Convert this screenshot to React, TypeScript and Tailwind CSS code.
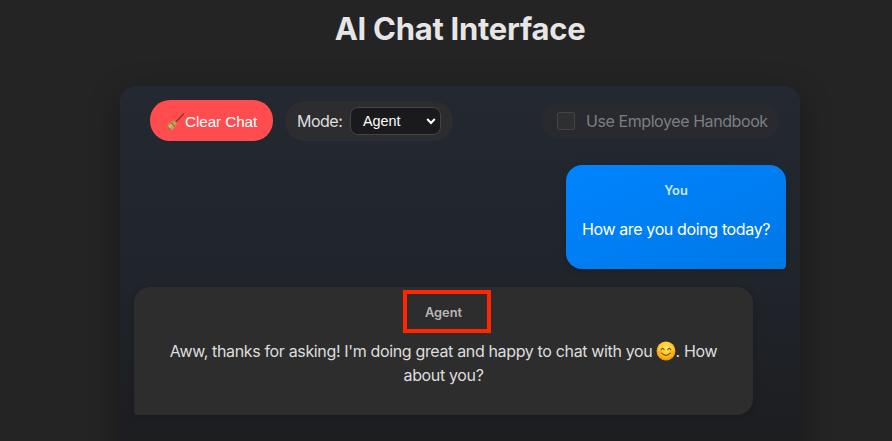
function Broom() {
  return (
    <svg viewBox="0 0 20 20" className="h-5 w-5 shrink-0">
      <path d="M18.6 2 11 9.8" stroke="#753e2a" strokeWidth="1.3" strokeLinecap="round" />
      <path d="M9.2 8.4 12 11.2 10.2 15 6.2 18.8 1.6 14.6 5.5 10.3Z" fill="#c39b55" />
      <path d="m5.8 10.6 4.2 4" stroke="#69502a" strokeWidth="1" />
      <path d="m7 12.5-2.8 3" stroke="#dfc174" strokeWidth="1.4" />
      <path d="m2.2 14.7 4 3.4" stroke="#886633" strokeWidth="1" />
    </svg>
  );
}

function Smile() {
  return (
    <svg viewBox="0 0 20 20" className="-ml-px inline-block h-5 w-5 align-[-4px]">
      <defs>
        <radialGradient id="smile-face" cx="50%" cy="35%" r="65%">
          <stop offset="0" stopColor="#ffe750" />
          <stop offset=".55" stopColor="#ffca2c" />
          <stop offset="1" stopColor="#f59008" />
        </radialGradient>
      </defs>
      <circle cx="10" cy="10" r="9.4" fill="url(#smile-face)" />
      <ellipse cx="4.3" cy="11.2" rx="2.4" ry="1.8" fill="#ff8a21" opacity=".35" />
      <ellipse cx="15.7" cy="11.2" rx="2.4" ry="1.8" fill="#ff8a21" opacity=".35" />
      <path d="M5.2 8.8Q6.7 5.9 8.2 8.8M11.8 8.8Q13.3 5.9 14.8 8.8M5.7 12.1Q10 16.6 14.3 12.1" fill="none" stroke="#7d4912" strokeWidth="1.1" strokeLinecap="round" />
    </svg>
  );
}

export default function App() {
  return (
    <main className="h-[441px] overflow-hidden bg-[#242424] font-[Inter,'Liberation_Sans',sans-serif] text-base text-[#dededf]">
      <h1 className="ml-7 h-[86px] pt-[11px] text-center text-[31px] leading-9 font-bold tracking-[-0.27px] text-[#e6e6e6]">AI Chat Interface</h1>
      <section className="ml-[120px] h-[440px] w-[680px] rounded-2xl bg-linear-to-b from-[#242830] via-[#20242b] via-45% to-[#1a1a1a] px-3.5 pt-3.5 shadow-[0_8px_32px_rgba(0,0,0,0.3)]">
        <header className="flex h-[41px] items-center pr-1.5 pl-4">
          <button className="flex h-[41px] w-[123px] items-center rounded-[20px] bg-[#ff4d4f] pt-[3px] pl-[15px] font-['Liberation_Sans',sans-serif] text-[15.2px] text-white">
            <Broom />
            <span className="whitespace-nowrap tracking-[-0.05px]">Clear Chat</span>
          </button>
          <div className="mt-px ml-3 flex h-10 w-[168px] items-center rounded-[20px] bg-[#2d2d2f] pl-3">
            <span className="w-[53px] tracking-[-0.5px]">Mode:</span>
            <button className="flex h-7 w-[91px] items-center justify-between rounded-lg border border-[#444] bg-[#1a1a1c] pr-[3px] pl-3 font-['Liberation_Sans',sans-serif] text-[14.4px] text-white">
              <span className="pt-px">Agent</span>
              <svg viewBox="0 0 12 12" className="h-3 w-3"><path d="m2.2 4 3.8 4 3.8-4" fill="none" stroke="white" strokeWidth="2" /></svg>
            </button>
          </div>
          <label className="ml-auto flex h-9 w-[239px] items-center rounded-[18px] bg-[#282a30] pl-4 text-[#7d7e81]">
            <span className="mr-[11px] h-[18px] w-[18px] rounded-[2px] border border-[#434447] bg-[#2e2f31]" />
            <span className="whitespace-nowrap tracking-[-0.42px]">Use Employee Handbook</span>
          </label>
        </header>
        <article className="mt-6 ml-auto h-[104px] w-[220px] rounded-2xl rounded-br-[4px] bg-linear-to-br from-[#0084ff] to-[#0078e7] pt-4 text-center text-white shadow-[0_2px_8px_rgba(0,0,0,0.15)]">
          <div className="text-[12.8px] leading-5 font-semibold text-[#cce6ff]">You</div>
          <p className="mt-4 leading-6 whitespace-nowrap tracking-[-0.37px]">How are you doing today?</p>
        </article>
        <article className="relative mt-[18px] h-32 w-[619px] rounded-2xl rounded-bl-[4px] bg-[#2d2d2d] pt-4 text-center shadow-[0_2px_8px_rgba(0,0,0,0.15)]">
          <div className="text-[12.8px] leading-5 font-semibold text-[#b8b8b8]">Agent</div>
          <p className="mt-4 leading-6 tracking-[-0.35px] whitespace-nowrap">
            Aww, thanks for asking! I&apos;m doing great and happy to chat with you <Smile />. How<br />about you?
          </p>
          <div className="absolute top-[3px] left-[269px] h-[43px] w-[88px] border-4 border-[#ff2600]" />
        </article>
      </section>
    </main>
  );
}
